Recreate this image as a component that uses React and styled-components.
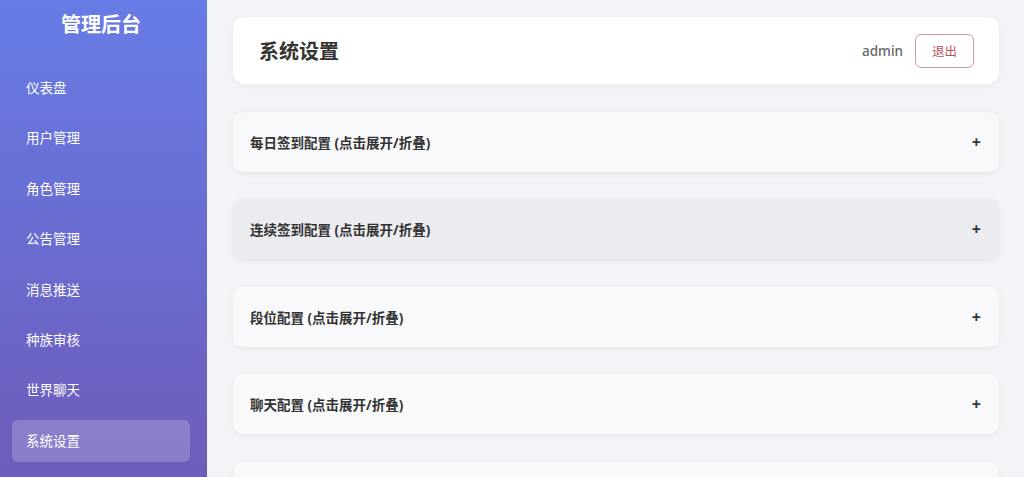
import React, { useState } from 'react'
import styled, { createGlobalStyle } from 'styled-components'

const GlobalStyle = createGlobalStyle`
  html, body {
    margin: 0;
    padding: 0;
    height: 100%;
    background: #f3f4f8;
    font-family: "Noto Sans", "Noto Sans CJK SC", sans-serif;
  }
  #root {
    height: 100%;
  }
`

const Layout = styled.div`
  display: flex;
  height: 100vh;
  overflow: hidden;
`

const Sidebar = styled.aside`
  width: 207px;
  flex-shrink: 0;
  padding: 12px 17px 0 12px;
  box-sizing: border-box;
  background: linear-gradient(180deg, #677ce6 0%, #6d5cba 100%);
  color: #fff;
`

const Brand = styled.h1`
  margin: 0;
  font-size: 20px;
  line-height: 26px;
  font-weight: 700;
  text-align: center;
`

const Nav = styled.nav`
  display: flex;
  flex-direction: column;
  gap: 8.4px;
  margin-top: 29px;
`

const NavItem = styled.a`
  display: block;
  height: 42px;
  line-height: 42px;
  padding: 0 14px;
  border-radius: 6px;
  font-size: 13.5px;
  color: #fff;
  text-decoration: none;
  background: ${p => (p.$active ? 'rgba(255, 255, 255, 0.2)' : 'transparent')};
  cursor: pointer;
`

const Main = styled.main`
  flex: 1;
  padding: 17px 25px 0 26px;
  display: flex;
  flex-direction: column;
  gap: 26.5px;
  overflow: hidden;
`

const Header = styled.header`
  display: flex;
  align-items: center;
  justify-content: space-between;
  height: 67px;
  flex-shrink: 0;
  padding: 0 25px 0 26px;
  background: #fff;
  border-radius: 12px;
  box-shadow: 0 2px 8px rgba(0, 0, 0, 0.04);
`

const Title = styled.h2`
  margin: 0;
  font-size: 20px;
  font-weight: 700;
  color: #333;
`

const User = styled.div`
  display: flex;
  align-items: center;
  gap: 12px;
`

const UserName = styled.span`
  font-size: 13.5px;
  font-weight: 500;
  color: #666;
`

const LogoutButton = styled.button`
  width: 59px;
  height: 34px;
  border: 1px solid #d39a9e;
  border-radius: 6px;
  background: #fff;
  color: #b8535b;
  font-family: inherit;
  font-size: 12.5px;
  cursor: pointer;
`

const Panel = styled.section`
  flex-shrink: 0;
  height: 61px;
  display: flex;
  align-items: center;
  justify-content: space-between;
  padding: 0 18px 0 17px;
  box-sizing: border-box;
  border-radius: 10px;
  border-top: 1px solid #eef0f3;
  background: ${p => (p.$hover ? '#ebecef' : '#f8f9fb')};
  box-shadow: 0 2px 6px rgba(0, 0, 0, ${p => (p.$hover ? 0.07 : 0.06)});
  cursor: pointer;
`

const PanelTitle = styled.span`
  font-size: 13.5px;
  font-weight: 700;
  color: #333;
`

const Toggle = styled.span`
  font-size: 16px;
  font-weight: 700;
  color: #333;
  line-height: 1;
`

const menu = ['仪表盘', '用户管理', '角色管理', '公告管理', '消息推送', '种族审核', '世界聊天', '系统设置']

const panels = [
  '每日签到配置',
  '连续签到配置',
  '段位配置',
  '聊天配置',
  '其他配置',
]

export default function App() {
  const [hover, setHover] = useState(1)

  return (
    <Layout>
      <GlobalStyle />
      <Sidebar>
        <Brand>管理后台</Brand>
        <Nav>
          {menu.map(item => (
            <NavItem key={item} $active={item === '系统设置'}>{item}</NavItem>
          ))}
        </Nav>
      </Sidebar>
      <Main>
        <Header>
          <Title>系统设置</Title>
          <User>
            <UserName>admin</UserName>
            <LogoutButton>退出</LogoutButton>
          </User>
        </Header>
        {panels.map((p, i) => (
          <Panel key={p} $hover={i === hover} onMouseEnter={() => setHover(i)}>
            <PanelTitle>{p} (点击展开/折叠)</PanelTitle>
            <Toggle>+</Toggle>
          </Panel>
        ))}
      </Main>
    </Layout>
  )
}
